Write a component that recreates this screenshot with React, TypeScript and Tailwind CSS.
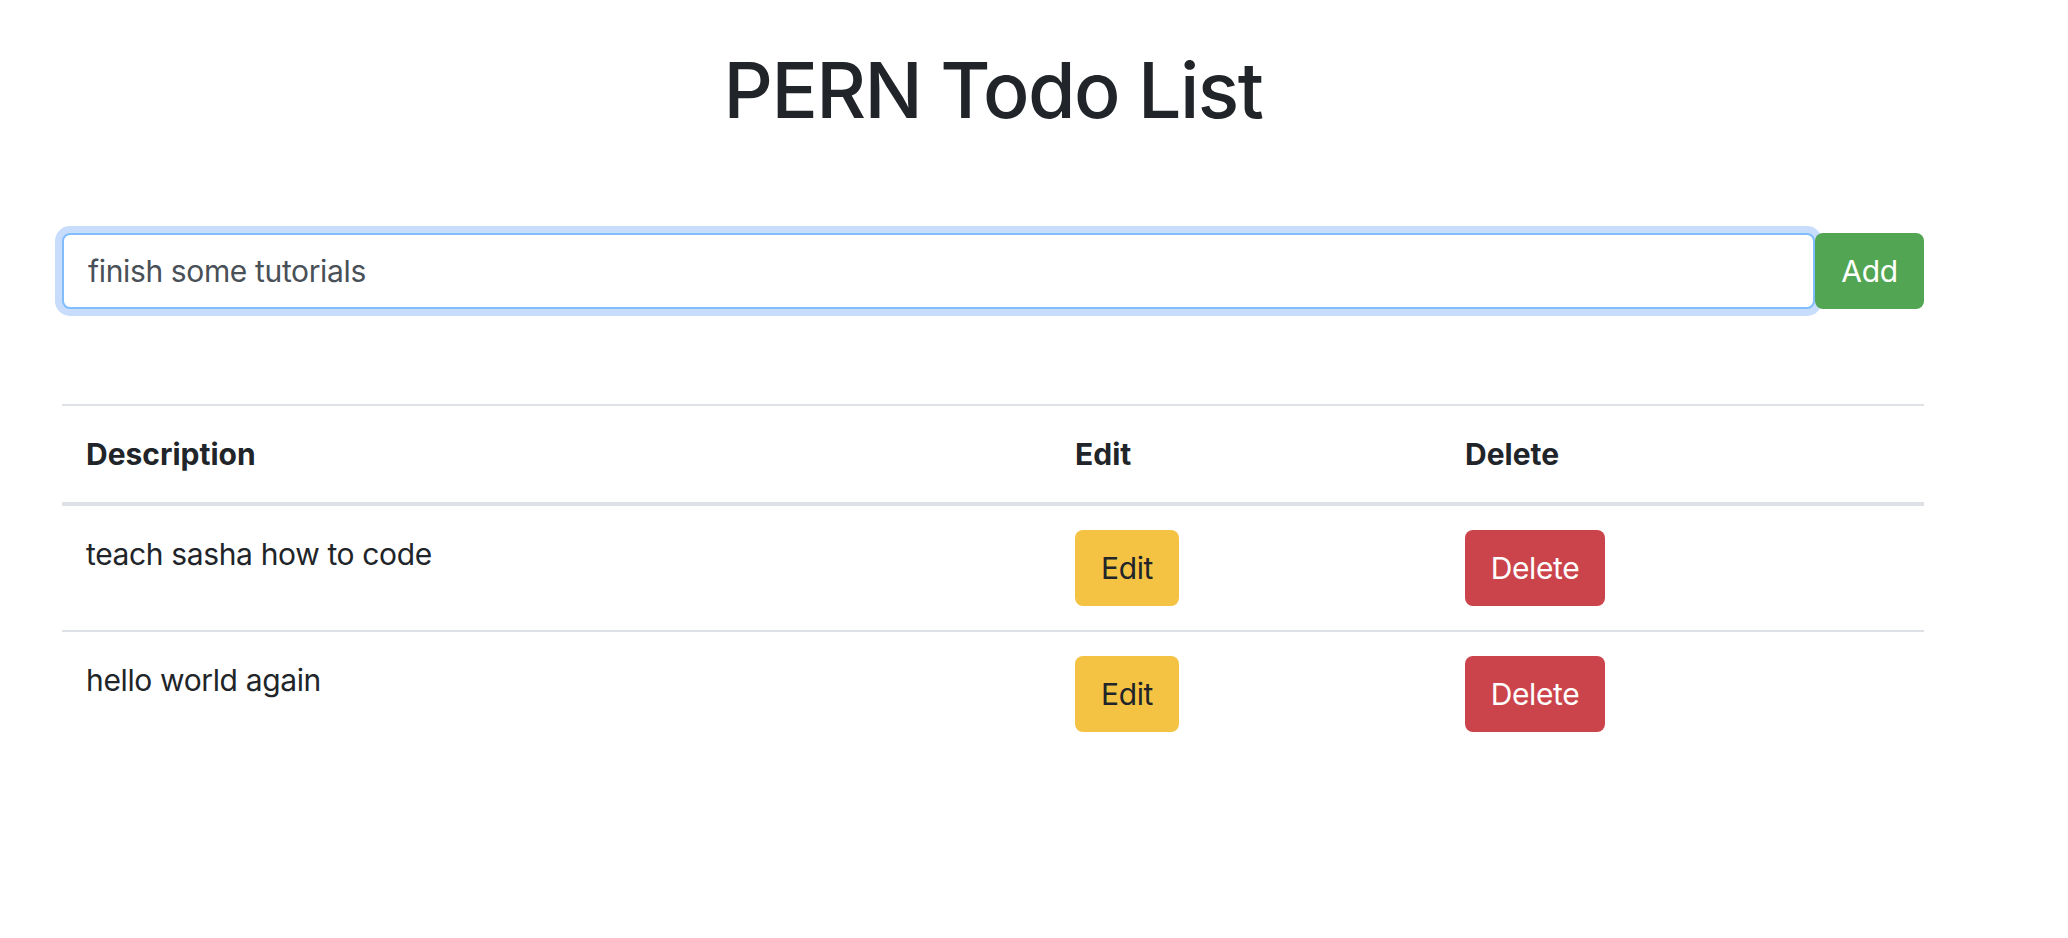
import React from "react";

const todos = [
  { id: 1, description: "teach sasha how to code" },
  { id: 2, description: "hello world again" },
];

export default function App() {
  return (
    <div className="min-h-screen bg-white font-['Inter',sans-serif] text-[#212529]">
      <div className="ml-[62px] w-[1862px] pt-[42px]">
        <h1 className="text-center text-[77px] leading-[96px] font-medium tracking-[-0.02em]">PERN Todo List</h1>

        {/* input + add */}
        <form className="mt-[95px] flex" onSubmit={(e) => e.preventDefault()}>
          <input
            className="h-[76px] flex-1 rounded-lg border-2 border-[#80bdff] bg-white px-[24px] text-[30px] tracking-[-0.012em] text-[#495057] shadow-[0_0_0_7px_#c8ddfb] outline-none"
            defaultValue="finish some tutorials"
            readOnly
          />
          <button type="submit" className="h-[76px] w-[109px] rounded-lg bg-[#52a552] text-[30px] tracking-[-0.012em] text-white">
            Add
          </button>
        </form>

        <table className="mt-[95px] w-full table-fixed text-left text-[30px]">
          <colgroup>
            <col className="w-[989px]" />
            <col className="w-[390px]" />
            <col />
          </colgroup>
          <thead>
            <tr className="border-t-2 border-[#dee2e6]">
              <th className="border-b-4 border-[#dee2e6] p-[24px] leading-[48px] font-bold">Description</th>
              <th className="border-b-4 border-[#dee2e6] p-[24px] leading-[48px] font-bold">Edit</th>
              <th className="border-b-4 border-[#dee2e6] p-[24px] leading-[48px] font-bold">Delete</th>
            </tr>
          </thead>
          <tbody className="tracking-[-0.012em]">
            {todos.map((todo, i) => (
              <tr key={todo.id} className={i === 0 ? "" : "border-t-2 border-[#dee2e6]"}>
                <td className="p-[24px] align-top leading-[48px]">{todo.description}</td>
                <td className="p-[24px] align-top">
                  <button className="h-[76px] w-[104px] rounded-lg bg-[#f5c343] text-[30px] text-[#212529]">Edit</button>
                </td>
                <td className="p-[24px] align-top">
                  <button className="h-[76px] w-[140px] rounded-lg bg-[#cb444b] text-[30px] text-white">Delete</button>
                </td>
              </tr>
            ))}
          </tbody>
        </table>
      </div>
    </div>
  );
}
